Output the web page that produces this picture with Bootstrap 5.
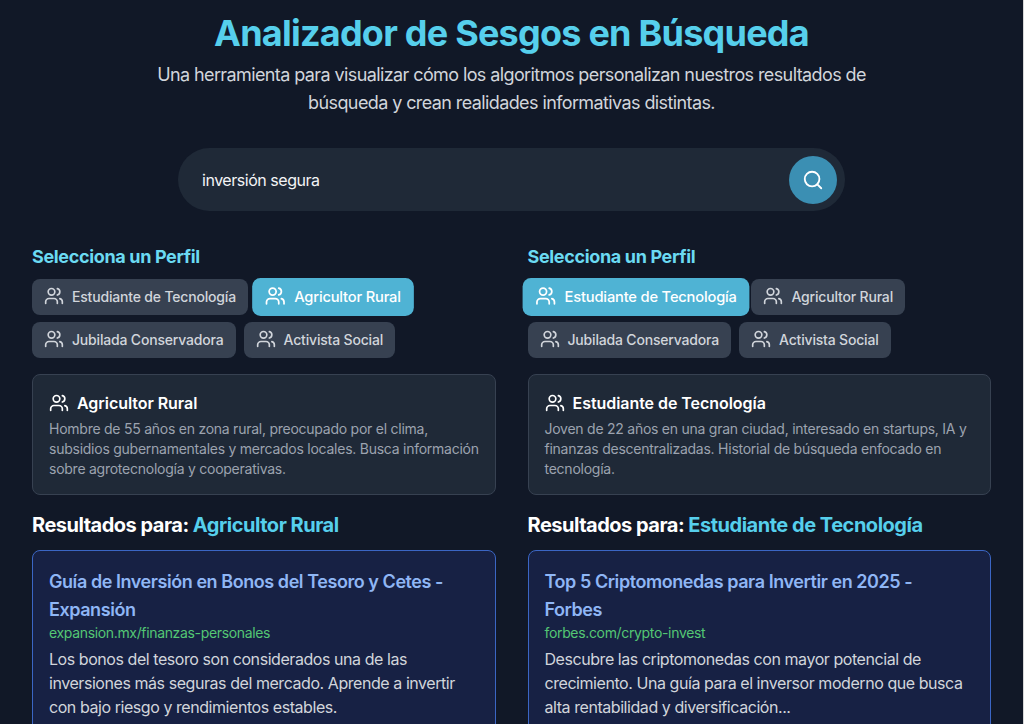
<!DOCTYPE html>
<html lang="es">
<head>
<meta charset="utf-8">
<title>Analizador de Sesgos en Búsqueda</title>
<link href="https://cdn.jsdelivr.net/npm/bootstrap@5.3.0/dist/css/bootstrap.min.css" rel="stylesheet">
<style>
html,body{height:724px;overflow:hidden}
body{background:#111827;color:#f3f4f6;font-family:Inter,"Liberation Sans",sans-serif;border-right:1px solid #d8d8d8}
.page-wrap{padding:13px 32px 0}
.app-title{font-size:36px;line-height:40px;font-weight:700;color:#56cfec;margin:0 0 8px;letter-spacing:-.77px}
.app-sub{font-size:18px;line-height:28px;color:#d1d5db;max-width:768px;margin:0 auto;letter-spacing:-.6px}
.search-bar{width:667px;height:63px;margin:31px auto 0;background:#1f2937;border-radius:32px;padding:0 8px 0 24px}
.search-text{font-size:16px;color:#f3f4f6;letter-spacing:-.47px}
.search-btn{width:48px;height:48px;background:#3b8fb3;border:0;border-radius:50%;padding:0;color:#fff}
.cols{display:grid;grid-template-columns:1fr 1fr;column-gap:32px;margin-top:32px}
.sel-title{font-size:18px;line-height:28px;font-weight:700;color:#6bdaf2;margin:0 0 8px;letter-spacing:-.35px}
.pills{row-gap:7px;column-gap:8px;margin-bottom:16px}
.pill-btn{height:36px;padding:0 12px 2px;background:#374151;border-radius:8px;font-size:14px;font-weight:500;color:#d1d5db;gap:8px;letter-spacing:-.18px}
.pill-on{background:#4fb3d4;color:#fff;transform:scale(1.05)}
.info-box{background:#1f2937;border:1px solid #374151;border-radius:8px;padding:16px;height:121px;margin-bottom:16px}
.info-title{font-size:16px;line-height:24px;font-weight:600;color:#fff;gap:8px;margin:0 0 4px;letter-spacing:-.05px}
.info-text{font-size:14px;line-height:20px;color:#9ca3af;margin:0 -6px 0 0;letter-spacing:-.25px}
.res-head{font-size:20px;line-height:28px;font-weight:700;color:#fff;margin:0 0 11px;letter-spacing:-.5px}
.res-name{color:#56cfec;font-weight:700;letter-spacing:-.48px}
.res-card{background:#172144;border:1px solid #3b66c4;border-radius:8px;padding:17px 16px 16px;height:260px}
.res-title{font-size:18px;line-height:28px;font-weight:600;color:#8fb6f5;margin:0;letter-spacing:-.44px;max-width:410px}
.res-url{font-size:14px;line-height:20px;color:#54c774;margin:-1px 0 4px;letter-spacing:-.34px}
.res-text{font-size:16px;line-height:24px;color:#d1d5db;margin:0;letter-spacing:-.44px}
.ic{width:20px;height:20px;flex:none;fill:none;stroke:currentColor;stroke-width:2;stroke-linecap:round;stroke-linejoin:round}
.ic-lg{width:22px;height:22px}
</style>
</head>
<body>
<div class="page-wrap">
  <header class="text-center">
    <h1 class="app-title">Analizador de Sesgos en Búsqueda</h1>
    <p class="app-sub">Una herramienta para visualizar cómo los algoritmos personalizan nuestros resultados de búsqueda y crean realidades informativas distintas.</p>
  </header>
  <div class="search-bar d-flex align-items-center justify-content-between">
    <span class="search-text">inversión segura</span>
    <button class="search-btn d-flex align-items-center justify-content-center" type="button" aria-label="Buscar">
      <svg class="ic ic-lg" viewBox="0 0 24 24"><circle cx="11" cy="11" r="8"/><path d="m21 21-4.3-4.3"/></svg>
    </button>
  </div>
  <div class="cols">
    <section>
      <h2 class="sel-title">Selecciona un Perfil</h2>
      <div class="pills d-flex flex-wrap">
        <span class="pill-btn d-inline-flex align-items-center"><svg class="ic" viewBox="0 0 24 24"><path d="M16 21v-2a4 4 0 0 0-4-4H6a4 4 0 0 0-4 4v2"/><circle cx="9" cy="7" r="4"/><path d="M22 21v-2a4 4 0 0 0-3-3.87"/><path d="M16 3.13a4 4 0 0 1 0 7.75"/></svg>Estudiante de Tecnología</span>
        <span class="pill-btn pill-on d-inline-flex align-items-center"><svg class="ic" viewBox="0 0 24 24"><path d="M16 21v-2a4 4 0 0 0-4-4H6a4 4 0 0 0-4 4v2"/><circle cx="9" cy="7" r="4"/><path d="M22 21v-2a4 4 0 0 0-3-3.87"/><path d="M16 3.13a4 4 0 0 1 0 7.75"/></svg>Agricultor Rural</span>
        <span class="pill-btn d-inline-flex align-items-center"><svg class="ic" viewBox="0 0 24 24"><path d="M16 21v-2a4 4 0 0 0-4-4H6a4 4 0 0 0-4 4v2"/><circle cx="9" cy="7" r="4"/><path d="M22 21v-2a4 4 0 0 0-3-3.87"/><path d="M16 3.13a4 4 0 0 1 0 7.75"/></svg>Jubilada Conservadora</span>
        <span class="pill-btn d-inline-flex align-items-center"><svg class="ic" viewBox="0 0 24 24"><path d="M16 21v-2a4 4 0 0 0-4-4H6a4 4 0 0 0-4 4v2"/><circle cx="9" cy="7" r="4"/><path d="M22 21v-2a4 4 0 0 0-3-3.87"/><path d="M16 3.13a4 4 0 0 1 0 7.75"/></svg>Activista Social</span>
      </div>
      <div class="info-box">
        <h3 class="info-title d-flex align-items-center"><svg class="ic" viewBox="0 0 24 24"><path d="M16 21v-2a4 4 0 0 0-4-4H6a4 4 0 0 0-4 4v2"/><circle cx="9" cy="7" r="4"/><path d="M22 21v-2a4 4 0 0 0-3-3.87"/><path d="M16 3.13a4 4 0 0 1 0 7.75"/></svg>Agricultor Rural</h3>
        <p class="info-text">Hombre de 55 años en zona rural, preocupado por el clima, subsidios gubernamentales y mercados locales. Busca información sobre agrotecnología y cooperativas.</p>
      </div>
      <h2 class="res-head">Resultados para: <span class="res-name">Agricultor Rural</span></h2>
      <article class="res-card">
        <h3 class="res-title">Guía de Inversión en Bonos del Tesoro y Cetes - Expansión</h3>
        <p class="res-url">expansion.mx/finanzas-personales</p>
        <p class="res-text">Los bonos del tesoro son considerados una de las inversiones más seguras del mercado. Aprende a invertir con bajo riesgo y rendimientos estables.</p>
      </article>
    </section>
    <section>
      <h2 class="sel-title">Selecciona un Perfil</h2>
      <div class="pills d-flex flex-wrap">
        <span class="pill-btn pill-on d-inline-flex align-items-center"><svg class="ic" viewBox="0 0 24 24"><path d="M16 21v-2a4 4 0 0 0-4-4H6a4 4 0 0 0-4 4v2"/><circle cx="9" cy="7" r="4"/><path d="M22 21v-2a4 4 0 0 0-3-3.87"/><path d="M16 3.13a4 4 0 0 1 0 7.75"/></svg>Estudiante de Tecnología</span>
        <span class="pill-btn d-inline-flex align-items-center"><svg class="ic" viewBox="0 0 24 24"><path d="M16 21v-2a4 4 0 0 0-4-4H6a4 4 0 0 0-4 4v2"/><circle cx="9" cy="7" r="4"/><path d="M22 21v-2a4 4 0 0 0-3-3.87"/><path d="M16 3.13a4 4 0 0 1 0 7.75"/></svg>Agricultor Rural</span>
        <span class="pill-btn d-inline-flex align-items-center"><svg class="ic" viewBox="0 0 24 24"><path d="M16 21v-2a4 4 0 0 0-4-4H6a4 4 0 0 0-4 4v2"/><circle cx="9" cy="7" r="4"/><path d="M22 21v-2a4 4 0 0 0-3-3.87"/><path d="M16 3.13a4 4 0 0 1 0 7.75"/></svg>Jubilada Conservadora</span>
        <span class="pill-btn d-inline-flex align-items-center"><svg class="ic" viewBox="0 0 24 24"><path d="M16 21v-2a4 4 0 0 0-4-4H6a4 4 0 0 0-4 4v2"/><circle cx="9" cy="7" r="4"/><path d="M22 21v-2a4 4 0 0 0-3-3.87"/><path d="M16 3.13a4 4 0 0 1 0 7.75"/></svg>Activista Social</span>
      </div>
      <div class="info-box">
        <h3 class="info-title d-flex align-items-center"><svg class="ic" viewBox="0 0 24 24"><path d="M16 21v-2a4 4 0 0 0-4-4H6a4 4 0 0 0-4 4v2"/><circle cx="9" cy="7" r="4"/><path d="M22 21v-2a4 4 0 0 0-3-3.87"/><path d="M16 3.13a4 4 0 0 1 0 7.75"/></svg>Estudiante de Tecnología</h3>
        <p class="info-text">Joven de 22 años en una gran ciudad, interesado en startups, IA y finanzas descentralizadas. Historial de búsqueda enfocado en tecnología.</p>
      </div>
      <h2 class="res-head">Resultados para: <span class="res-name">Estudiante de Tecnología</span></h2>
      <article class="res-card">
        <h3 class="res-title">Top 5 Criptomonedas para Invertir en 2025 - Forbes</h3>
        <p class="res-url">forbes.com/crypto-invest</p>
        <p class="res-text">Descubre las criptomonedas con mayor potencial de crecimiento. Una guía para el inversor moderno que busca alta rentabilidad y diversificación...</p>
      </article>
    </section>
  </div>
</div>
<script src="https://cdn.jsdelivr.net/npm/bootstrap@5.3.0/dist/js/bootstrap.bundle.min.js"></script>
</body>
</html>
